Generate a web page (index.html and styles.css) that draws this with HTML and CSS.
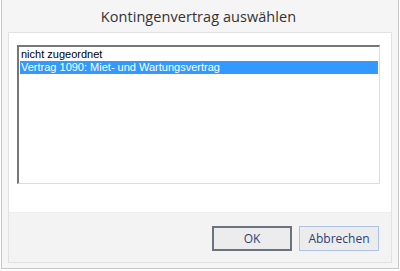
FILE: index.html
```html
<!DOCTYPE html>
<html lang="de">
<head>
  <meta charset="UTF-8">
  <title>Kontingenvertrag auswählen</title>
  <link rel="stylesheet" href="styles.css">
</head>
<body>
  <div class="window">
    <div class="title">Kontingenvertrag auswählen</div>
    <div class="panel">
      <div class="content">
        <ul class="listbox">
          <li class="item">nicht zugeordnet</li>
          <li class="item selected">Vertrag 1090: Miet- und Wartungsvertrag</li>
        </ul>
      </div>
      <div class="footer">
        <button class="btn default">OK</button>
        <button class="btn">Abbrechen</button>
      </div>
    </div>
  </div>
</body>
</html>
```

FILE: styles.css
```css
/* Dialog frame */
body {
  margin: 0;
  background: #fff;
  font-family: 'Open Sans', sans-serif;
}

.window {
  width: 398px;
  height: 269px;
  margin: 0 0 0 1px;
  border: 1px solid #c8c8c8;
  border-top: none;
  background: #f5f5f5;
  box-sizing: border-box;
  padding: 0 6px 5px 6px;
  display: flex;
  flex-direction: column;
}

.title {
  height: 32px;
  line-height: 34px;
  text-align: center;
  font-size: 14.5px;
  color: #333;
  letter-spacing: 0.05px;
  padding-right: 3px;
}

.panel {
  flex: 1;
  border: 1px solid #e2e2e2;
  display: flex;
  flex-direction: column;
}

.content {
  background: #fff;
  height: 179px;
  padding: 12px 11px 0 8px;
  box-sizing: border-box;
}

.listbox {
  list-style: none;
  margin: 0;
  padding: 1px;
  height: 139px;
  box-sizing: border-box;
  border-top: 2px solid #777;
  border-left: 2px solid #777;
  border-right: 1px solid #ddd;
  border-bottom: 1px solid #ddd;
  font-family: 'Liberation Sans', Arial, sans-serif;
  font-size: 11px;
}

.item {
  height: 13px;
  line-height: 13px;
  padding-left: 1px;
  color: #000;
}

.item.selected {
  background: #3399ff;
  color: #fff;
}

.footer {
  flex: 1;
  background: #f3f3f3;
  border-top: 1px solid #efefef;
  display: flex;
  justify-content: flex-end;
  align-items: flex-start;
  gap: 7px;
  padding: 13px 12px 0 0;
}

.btn {
  width: 80px;
  height: 25px;
  background: #ececec;
  border: 1px solid #acc3e6;
  font-family: 'Open Sans', sans-serif;
  font-size: 12px;
  color: #2e3f78;
  padding: 0;
}

.btn.default {
  border: 2px solid #6b7280;
}
```
